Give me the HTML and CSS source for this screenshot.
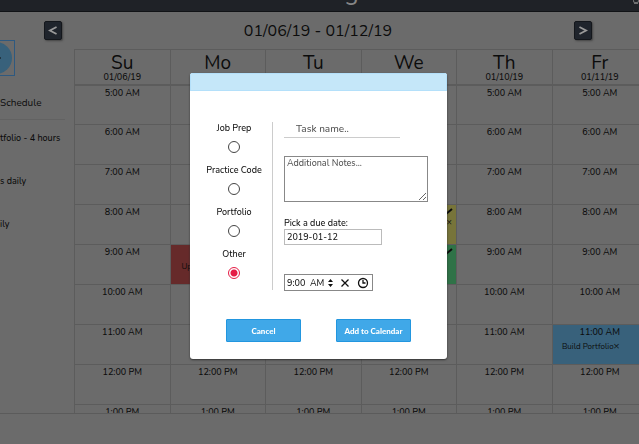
FILE: index.html
```html
<!DOCTYPE html>
<html lang="en">
<head>
<meta charset="utf-8">
<title>Weekly schedule</title>
<link rel="stylesheet" href="styles.css">
</head>
<body>
<header class="topbar"><span class="brand">g</span><span class="menu-mark"><svg viewBox="0 0 6 5" aria-hidden="true"><path d="M0 0 2 4 3 2 4 4 6 0"/></svg></span></header>
<div class="weekbar">
  <button class="nav" type="button" aria-label="Previous week"><svg viewBox="0 0 18 18"><path d="M13 5 5.500 9 13 13"/></svg></button>
  <h1>01/06/19 - 01/12/19</h1>
  <button class="nav" type="button" aria-label="Next week"><svg viewBox="0 0 18 18"><path d="M5 5 12.500 9 5 13"/></svg></button>
</div>
<main class="content">
  <aside class="side">
    <div class="avatar"><svg viewBox="0 0 14 34" aria-hidden="true"><circle cx="-4" cy="17" r="16"/><path d="M0 17h1"/></svg></div>
    <h2>Schedule</h2>
    <ul>
      <li>tfolio - 4 hours</li>
      <li>s daily</li>
      <li>ily</li>
    </ul>
  </aside>
  <section class="calendar">
    <table>
      <thead>
        <tr><th><b>Su</b>01/06/19</th><th><b>Mo</b>01/07/19</th><th><b>Tu</b>01/08/19</th><th><b>We</b>01/09/19</th><th><b>Th</b>01/10/19</th><th><b>Fr</b>01/11/19</th></tr>
      </thead>
      <tbody>
        <tr><td>5:00 AM</td><td></td><td></td><td></td><td>5:00 AM</td><td>5:00 AM</td></tr>
        <tr><td>6:00 AM</td><td></td><td></td><td></td><td>6:00 AM</td><td>6:00 AM</td></tr>
        <tr><td>7:00 AM</td><td></td><td></td><td></td><td>7:00 AM</td><td>7:00 AM</td></tr>
        <tr><td>8:00 AM</td><td></td><td></td><td class="yellow"><div class="tools"><svg viewBox="0 0 10 10"><path d="M2 8 8 3"/></svg><span>×</span></div></td><td>8:00 AM</td><td>8:00 AM</td></tr>
        <tr><td>9:00 AM</td><td class="red"><p class="start">Up</p></td><td></td><td class="green"><div class="tools"><svg viewBox="0 0 10 10"><path d="M2 8 8 3"/></svg></div></td><td>9:00 AM</td><td>9:00 AM</td></tr>
        <tr><td>10:00 AM</td><td></td><td></td><td></td><td>10:00 AM</td><td>10:00 AM</td></tr>
        <tr><td>11:00 AM</td><td></td><td></td><td></td><td>11:00 AM</td><td class="blue">11:00 AM<p>Build Portfolio<span class="remove">×</span></p></td></tr>
        <tr><td>12:00 PM</td><td>12:00 PM</td><td>12:00 PM</td><td>12:00 PM</td><td>12:00 PM</td><td>12:00 PM</td></tr>
        <tr><td>1:00 PM</td><td>1:00 PM</td><td>1:00 PM</td><td>1:00 PM</td><td>1:00 PM</td><td>1:00 PM</td></tr>
      </tbody>
    </table>
  </section>
</main>
<div class="overlay">
  <form class="modal" role="dialog" aria-label="Add task">
    <div class="modal-head"></div>
    <div class="modal-body">
      <div class="kinds">
        <label>Job Prep<input type="radio" name="kind"></label>
        <label>Practice Code<input type="radio" name="kind"></label>
        <label>Portfolio<input type="radio" name="kind"></label>
        <label>Other<input type="radio" name="kind" checked></label>
      </div>
      <div class="fields">
        <input class="task" type="text" placeholder="Task name.." aria-label="Task name">
        <textarea placeholder="Additional Notes..." aria-label="Additional notes"></textarea>
        <label class="due-label" for="due">Pick a due date:</label>
        <input class="due" id="due" type="text" value="2019-01-12">
        <div class="time">
          <input type="text" value="9:00  AM" aria-label="Time">
          <button type="button" aria-label="Change hour"><svg class="spin" viewBox="0 0 5 10"><path d="M0 4 2.500 1 5 4ZM0 6 2.500 9 5 6Z"/></svg></button>
          <button type="button" aria-label="Clear time"><svg class="icon" viewBox="0 0 12 12"><path d="m2.500 2.500 7 7M9.500 2.500 2.500 9.500"/></svg></button>
          <button type="button" aria-label="Choose time"><svg class="icon" viewBox="0 0 12 12"><circle cx="6" cy="6" r="4.500"/><path d="M6 3v3h2.500"/></svg></button>
        </div>
      </div>
    </div>
    <div class="actions">
      <button type="button">Cancel</button>
      <button type="submit">Add to Calendar</button>
    </div>
  </form>
</div>
</body>
</html>
```
FILE: styles.css
```css
* { box-sizing: border-box; }
body, h1, h2, p, ul { margin: 0; padding: 0; }
body {
  min-height: 100vh;
  overflow: hidden;
  background: #6b6b6b;
  color: #0c0c0c;
  font: 500 9px/12px Nunito, Lato, sans-serif;
}
button, input, textarea { font: inherit; color: inherit; margin: 0; padding: 0; }
svg { display: block; fill: none; stroke: currentColor; }
.topbar {
  display: grid;
  grid-template-columns: 1fr auto 1fr;
  height: 12px;
  overflow: hidden;
  background: #1f2227;
  border-bottom: 1px solid #111316;
  color: #858585;
}
.brand { grid-column: 2; margin-left: 64px; font-size: 24px; line-height: 20px; margin-top: -18px; }
.menu-mark { justify-self: end; }
.menu-mark svg { width: 6px; height: 5px; }
.weekbar {
  display: flex;
  justify-content: space-between;
  align-items: center;
  height: 37px;
  padding: 0 47px 0 44px;
}
.weekbar h1 { font-size: 16px; line-height: 24px; font-weight: 400; }
.nav {
  width: 18px;
  height: 19px;
  border: 1px solid #14171c;
  border-radius: 2px;
  background: #1f242c;
  color: #999;
  box-shadow: 1px 1px 2px #444;
}
.nav svg { width: 16px; height: 17px; stroke-width: 2; }
.content { display: flex; height: 365px; border-bottom: 1px solid #5b5b5b; }
.side {
  flex: none;
  width: 74px;
  border-radius: 0 0 3px 0;
}
.avatar {
  width: 15px;
  height: 36px;
  margin-top: -9px;
  border: 1px solid #2e5980;
  border-left: 0;
}
.avatar svg { width: 14px; height: 34px; }
.avatar circle { fill: #38617b; stroke: none; }
.side h2 {
  width: 65px;
  height: 44px;
  padding-top: 20px;
  border-bottom: 1px solid #626262;
  font-size: 10px;
  line-height: 14px;
  font-weight: 400;
}
.side ul { list-style: none; padding-top: 12px; }
.side li { height: 43px; white-space: nowrap; }
.calendar { flex: none; width: 574px; overflow: hidden; }
table { width: 100%; table-layout: fixed; border-collapse: collapse; }
th, td {
  border: 1px solid #5c5c5c;
  padding: 1px 0 0;
  text-align: center;
  vertical-align: top;
  font-weight: 500;
}
th { height: 35px; padding: 3px 0 0; border-bottom-width: 2px; line-height: 9px; }
th b { display: block; font-size: 19px; line-height: 20px; font-weight: 400; }
td { height: 40px; }
td p { font-size: 8px; line-height: 12px; padding: 2px 18px 0 0; font-weight: 400; }
td .start { text-align: left; padding: 15px 0 0 11px; }
.red { background: #662a2a; }
.yellow { background: #77743a; }
.green { background: #2f7247; }
.blue { background: #38617b; }
.remove { font-size: 10px; }
.tools { display: flex; flex-direction: column; align-items: flex-end; padding-right: 2px; }
.tools svg { width: 10px; height: 10px; stroke-width: 2; }
.tools span { padding-right: 2px; }
.overlay {
  position: fixed;
  inset: 0;
  display: flex;
  justify-content: center;
  align-items: flex-start;
  padding: 73px 2px 0 0;
}
.modal {
  width: 257px;
  padding-bottom: 17px;
  border-radius: 3px;
  background: #fff;
  color: #111;
  box-shadow: 0 1px 2px #333;
  overflow: hidden;
}
.modal-head { height: 18px; background: #c5e7f9; border: 1px solid #b4e0fa; }
.modal-body { display: flex; padding: 31px 19px 0 6px; }
.kinds { width: 77px; height: 168px; border-right: 1px solid #ccc; }
.kinds label { display: flex; flex-direction: column; align-items: center; gap: 7px; height: 42px; white-space: nowrap; }
.kinds input {
  appearance: none;
  width: 12px;
  height: 12px;
  border: 1px solid #444;
  border-radius: 50%;
}
.kinds input:checked { border-color: #e51c45; background: radial-gradient(circle, #e51c45 3px, #fff 4px); }
.fields { flex: 1; padding-left: 11px; }
::placeholder { color: #555; opacity: 1; }
.task { display: block; width: 116px; height: 16px; border: 0; border-bottom: 1px solid #ccc; padding: 0 0 2px 12px; font-size: 10px; }
textarea { display: block; width: 100%; height: 46px; margin-top: 18px; padding: 0 2px; border: 1px solid #888; resize: vertical; }
.due-label { display: block; margin-top: 16px; line-height: 11px; }
.due { display: block; width: 98px; height: 16px; padding: 0 2px; border: 1px solid #bbb; }
.time { display: flex; align-items: center; width: 89px; height: 17px; margin-top: 29px; padding: 0 2px; border: 1px solid #888; }
.time input { width: 41px; border: 0; background: none; white-space: pre; }
.time button { border: 0; background: none; }
.spin { width: 5px; height: 10px; fill: currentColor; stroke: none; }
.icon { width: 12px; height: 12px; margin-left: 6px; stroke-width: 1.3; }
.actions { display: flex; justify-content: space-between; padding: 28px 36px 0; }
.actions button {
  width: 75px;
  height: 23px;
  border: 1px solid #2296df;
  border-radius: 1px;
  background: #40a8e8;
  color: #fff;
  font: 900 8px/12px Lato, sans-serif;
}
```
